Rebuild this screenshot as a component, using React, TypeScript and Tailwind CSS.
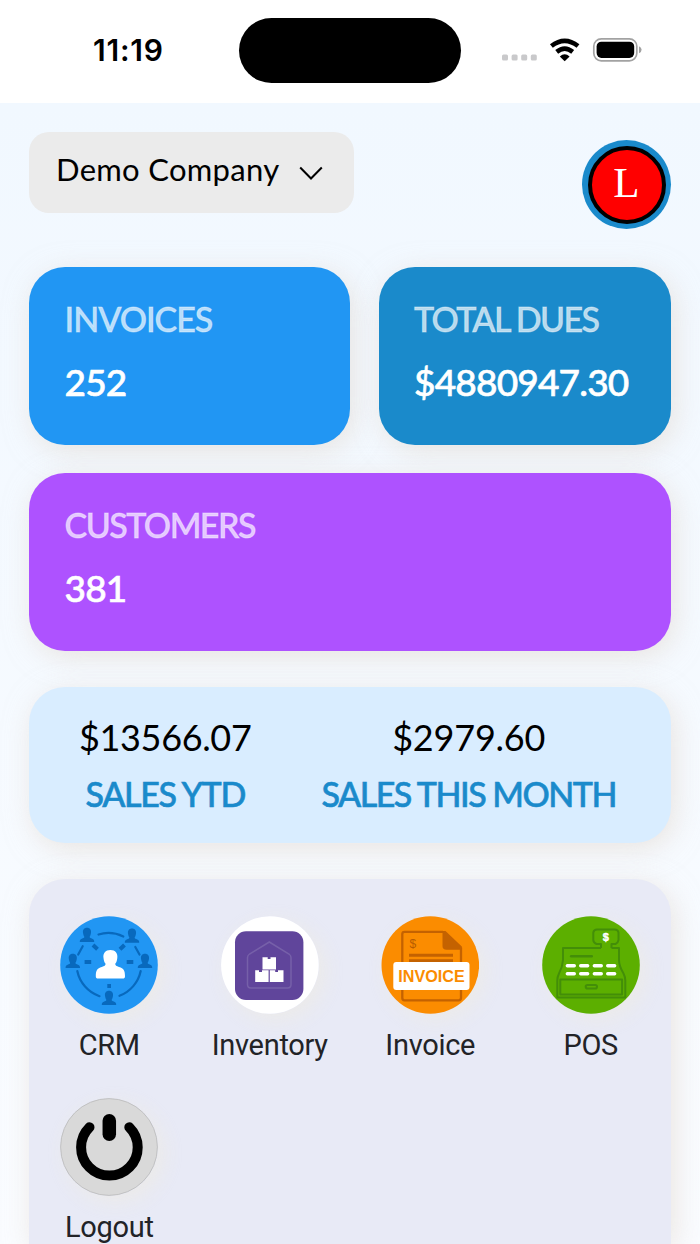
import type { ReactNode } from "react";

function StatusBar() {
  return (
    <header className="flex h-[103px] shrink-0 bg-white">
      <div className="w-[239px] pt-[31px] pl-[93px] font-['Inter'] text-[30px] leading-[38px] font-semibold tracking-[0.8px] text-black">11:19</div>
      <div className="mt-[18px] h-[65px] w-[222px] rounded-full bg-black" />
      <svg className="mt-[30px] ml-[39px]" width="145" height="42" viewBox="500 30 145 42">
        <g fill="#c9c9cb">
          <rect x="502" y="54.5" width="6" height="6" rx="1.5" />
          <rect x="511.6" y="54.5" width="6" height="6" rx="1.5" />
          <rect x="521.2" y="54.5" width="6" height="6" rx="1.5" />
          <rect x="530.8" y="54.5" width="6" height="6" rx="1.5" />
        </g>
        <g fill="none" stroke="#000" strokeWidth="4.6">
          <path d="M551.4 46 Q564.7 35.6 578 46" />
          <path d="M556.7 51.9 Q564.7 45.4 572.7 51.9" />
        </g>
        <path d="M564.7 61.2 L559.8 56.4 Q564.7 52 569.6 56.4 Z" />
        <rect x="593.8" y="38.8" width="43" height="22" rx="7.5" fill="none" stroke="#a2a2a2" strokeWidth="1.7" />
        <rect x="596.6" y="41.7" width="37.6" height="16.2" rx="4.8" />
        <path d="M639 46.3 q2.6 1 2.6 3.5 t-2.6 3.5z" fill="#a2a2a2" />
      </svg>
    </header>
  );
}

function StatCard({ color, title, value, titleSpacing }: { color: string; title: string; value: string; titleSpacing: string }) {
  return (
    <section className={`h-[178px] rounded-[36px] pt-[31px] pl-[35.5px] font-['Lato'] whitespace-nowrap text-white shadow-[4px_6px_28px_rgba(222,212,200,0.55)] ${color}`}>
      <h2 className={`text-[34px] leading-[42px] font-medium text-white/70 [-webkit-text-stroke:0.9px_rgba(255,255,255,0.4)] ${titleSpacing}`}>{title}</h2>
      <p className="mt-[19px] text-[37px] leading-[46px] font-medium tracking-[-0.8px] [-webkit-text-stroke:0.6px_white]">{value}</p>
    </section>
  );
}

function Person({ x, y }: { x: number; y: number }) {
  return (
    <g transform={`translate(${x} ${y})`} fill="#0869bd">
      <path d="M0-7.2c3 0 4.4 2.2 4 5C3.7 .2 3 1.2 2.6 2c.1 .9 1.2 1.2 2.6 1.7C6.8 4.4 7.2 5.2 7.2 7H-7.2C-7.2 5.2-6.8 4.4-5.2 3.7-3.8 3.2-2.7 2.9-2.6 2-3 1.2-3.7 .2-4-2.2-4.4-5-3-7.2 0-7.2z" />
    </g>
  );
}

function CrmIcon() {
  return (
    <svg width="98" height="98" viewBox="60 916 98 98">
      <circle cx="109" cy="965" r="48.8" fill="#2196f3" />
      <g fill="none" stroke="#0869bd" strokeWidth="2.2" strokeLinecap="round">
        <path d="M98.5 934.5Q111 930.5 123.3 936.5M82.7 946.2L78.2 954.5M135.3 947L139.5 954.5M77.3 971A34 34 0 0 0 99.5 996.2M119.5 995.8A34 34 0 0 0 140.7 971" />
      </g>
      <g fill="none" stroke="#0869bd" strokeWidth="4">
        <path d="M84.6 962H91.2M126.7 962H133.3M93 945l4.5 4.3M124.5 945l-4.5 4.3M107.3 986H111" />
      </g>
      <Person x={87} y={935} />
      <Person x={132} y={935.8} />
      <Person x={72.8} y={961} />
      <Person x={145} y={961} />
      <Person x={109} y={998} />
      <path fill="#fff" d="M110.4 950c5 0 7.6 3.5 6.9 8-.3 3-1.2 4.8-2.1 5.8 0 1.6 1.2 2.4 3.8 3.2 4.8 1.4 6 3.4 6 9.3 0 1.4-.6 2.3-2.5 2.3h-24.2c-1.9 0-2.5-.9-2.5-2.3 0-5.9 1.2-7.9 6-9.3 2.6-.8 3.8-1.6 3.8-3.2-.9-1-1.8-2.8-2.1-5.8-.7-4.5 1.9-8 6.9-8z" />
    </svg>
  );
}

function InventoryIcon() {
  return (
    <svg width="98" height="98" viewBox="221 916 98 98">
      <circle cx="269.9" cy="965" r="48.8" fill="#fff" />
      <rect x="235" y="931.3" width="68.4" height="68.7" rx="11" fill="#60459b" />
      <path d="M269.3 942L289 954Q291 955.5 291 957.5V984.5Q291 988 287.5 988H251Q247.5 988 247.5 984.5V957.5Q247.5 955.5 249.5 954Z" fill="none" stroke="#7660a9" strokeWidth="1.5" />
      <path fill="#fff" d="M262.5 957.2h5.2v1.8h2.8v-1.8h5.5v12.2h-13.5zM255.2 970.2h3.8v1.8h3v-1.8h6.6v11.8h-13.4zM269.8 970.2h5.4v1.8h2.8v-1.8h5.5v11.8H269.8z" />
    </svg>
  );
}

function InvoiceIcon() {
  return (
    <svg width="98" height="98" viewBox="381 916 98 98">
      <circle cx="430.3" cy="965" r="48.8" fill="#fb8c00" />
      <path d="M443 931.8H404.5Q402.3 931.8 402.3 934V998Q402.3 1000.3 404.5 1000.3H458.5Q461 1000.3 461 998V947.5" fill="none" stroke="#c46200" strokeWidth="2.3" />
      <path d="M442.5 931H445.5L461.8 946.5V949.8H446.5Q442.5 949.8 442.5 946Z" fill="#c46200" />
      <path d="M409 955.3h44M409 960.8h44" stroke="#c46200" strokeWidth="3" />
      <text x="409.5" y="948.3" fontFamily="Liberation Sans" fontSize="12" fill="#b75c00">$</text>
      <rect x="393.3" y="962" width="76.2" height="28" rx="3" fill="#fff" />
      <text x="398.3" y="982.2" fontFamily="Liberation Sans" fontSize="17" fontWeight="700" textLength="66.5" lengthAdjust="spacingAndGlyphs" fill="#fb8c00">INVOICE</text>
    </svg>
  );
}

function PosIcon() {
  return (
    <svg width="98" height="98" viewBox="542 916 98 98">
      <circle cx="591" cy="965" r="48.8" fill="#5caf00" />
      <g fill="none" stroke="#438e08" strokeWidth="2" strokeLinejoin="round">
        <path d="M601 948H563V960Q562.5 967 559 973.5Q557.3 977 557.3 980.5V997.5H625.3V980.5Q625.3 977 623.5 973.5Q619 966 619 960V948H611.5" />
        <path d="M601 948V944H596.5Q593.3 942.5 593.3 940V932.5Q594 929.5 597 929.5H614.5Q618 929.5 618.5 932.5V940Q618 943 615.5 944H611.5V948" />
        <rect x="560.3" y="979.5" width="61.8" height="15" />
        <rect x="585.7" y="985" width="11.3" height="3.6" rx="1.8" />
      </g>
      <path d="M571.2 956.3h20.5" stroke="#438e08" strokeWidth="2.6" strokeLinecap="round" />
      <path d="M567.3 965.8h7M580.7 965.8h7M594.3 965.8h7M607.7 965.8h7M567.3 973.8h7M580.7 973.8h7M594.3 973.8h7M607.7 973.8h7" stroke="#fff" strokeWidth="3.4" strokeLinecap="round" />
      <text x="602.8" y="941.2" fontFamily="Liberation Sans" fontSize="11" fontWeight="700" fill="#fff" stroke="#fff" strokeWidth="0.4">$</text>
    </svg>
  );
}

function LogoutIcon() {
  return (
    <svg width="98" height="98" viewBox="60 1098 98 98">
      <circle cx="109" cy="1147" r="48.4" fill="#d9d9d9" stroke="#bdbdbd" strokeWidth="0.9" />
      <path d="M89.5 1127.2A28.3 28.3 0 1 0 129.3 1127.2" fill="none" stroke="#000" strokeWidth="10" strokeLinecap="round" />
      <path d="M109.3 1120.8V1134.2" stroke="#000" strokeWidth="13.5" strokeLinecap="round" />
    </svg>
  );
}

function AppTile({ icon, label, spacing }: { icon: ReactNode; label: string; spacing: string }) {
  return (
    <div className="flex h-[182px] flex-col items-center">
      <div className="size-[98px] rounded-full shadow-[6px_6px_20px_rgba(238,235,228,0.75)]">{icon}</div>
      <span className={`mt-[13px] font-['Roboto'] text-[29px] leading-[36px] text-[#222327] ${spacing}`}>{label}</span>
    </div>
  );
}

function Sales({ amount, label, amountSpacing, spacing }: { amount: string; label: string; amountSpacing: string; spacing: string }) {
  return (
    <div className="flex flex-col items-center whitespace-nowrap">
      <p className={`text-[36px] leading-[44px] text-black ${amountSpacing}`}>{amount}</p>
      <p className={`mt-[15px] text-[34px] leading-[40px] font-medium text-[#1a8acb] [-webkit-text-stroke:0.6px_#1a8acb] ${spacing}`}>{label}</p>
    </div>
  );
}

export default function App() {
  return (
    <div className="flex h-[1244px] w-[700px] flex-col overflow-hidden bg-white">
      <StatusBar />
      <main className="flex flex-1 flex-col bg-gradient-to-b from-[#f1f8ff] to-[#fafcff] px-[29px] pt-[28.5px] font-['Lato']">
        <div className="flex justify-between">
          <button className="flex h-[81px] w-[325px] items-start rounded-[20px] bg-[#ebebeb] pt-[17px] pl-[27px] text-[31px] leading-[40px] tracking-[0.3px] text-black">
            <span className="w-[224px] text-left whitespace-nowrap">Demo Company</span>
            <svg className="mt-[16px] ml-[19px]" width="24" height="17" viewBox="0 0 24 17" fill="none">
              <path d="M1.2 2.5L12 13.5L22.8 2.5" stroke="#000" strokeWidth="2" />
            </svg>
          </button>
          <div className="mt-[8.5px] flex size-[89px] items-center justify-center rounded-full bg-[#1a8acb]">
            <div className="flex size-[78px] items-center justify-center rounded-full border-[4.5px] border-black bg-[#ff0000] pb-1 font-['Liberation_Serif'] text-[43px] leading-none text-white">L</div>
          </div>
        </div>
        <div className="mt-[37.5px] flex gap-[28.5px]">
          <div className="w-[321px]"><StatCard color="bg-[#2196f3]" title="INVOICES" value="252" titleSpacing="tracking-[-1px]" /></div>
          <div className="w-[292.5px]"><StatCard color="bg-[#1a8acb]" title="TOTAL DUES" value="$4880947.30" titleSpacing="tracking-[-1.6px]" /></div>
        </div>
        <div className="mt-[28px]"><StatCard color="bg-[#ae52ff]" title="CUSTOMERS" value="381" titleSpacing="tracking-[-1.5px]" /></div>
        <section className="mt-[36px] flex h-[156px] justify-center gap-[70px] rounded-[36px] bg-[#d9edff] pt-[28.5px] pr-[5px] shadow-[4px_6px_28px_rgba(222,212,200,0.55)]">
          <Sales amount="$13566.07" label="SALES YTD" amountSpacing="tracking-[-0.35px]" spacing="tracking-[-1.35px]" />
          <Sales amount="$2979.60" label="SALES THIS MONTH" amountSpacing="tracking-[-0.2px]" spacing="tracking-[-1.5px]" />
        </section>
        <section className="mt-[36px] grid h-[365px] shrink-0 grid-cols-4 content-start rounded-t-[36px] bg-[#e8eaf6] pt-[37px] shadow-[4px_6px_28px_rgba(222,212,200,0.55)]">
          <AppTile icon={<CrmIcon />} label="CRM" spacing="tracking-[-0.3px]" />
          <AppTile icon={<InventoryIcon />} label="Inventory" spacing="tracking-[-0.3px]" />
          <AppTile icon={<InvoiceIcon />} label="Invoice" spacing="tracking-[-0.3px]" />
          <AppTile icon={<PosIcon />} label="POS" spacing="tracking-[-0.4px]" />
          <AppTile icon={<LogoutIcon />} label="Logout" spacing="tracking-[-0.3px]" />
        </section>
      </main>
    </div>
  );
}
